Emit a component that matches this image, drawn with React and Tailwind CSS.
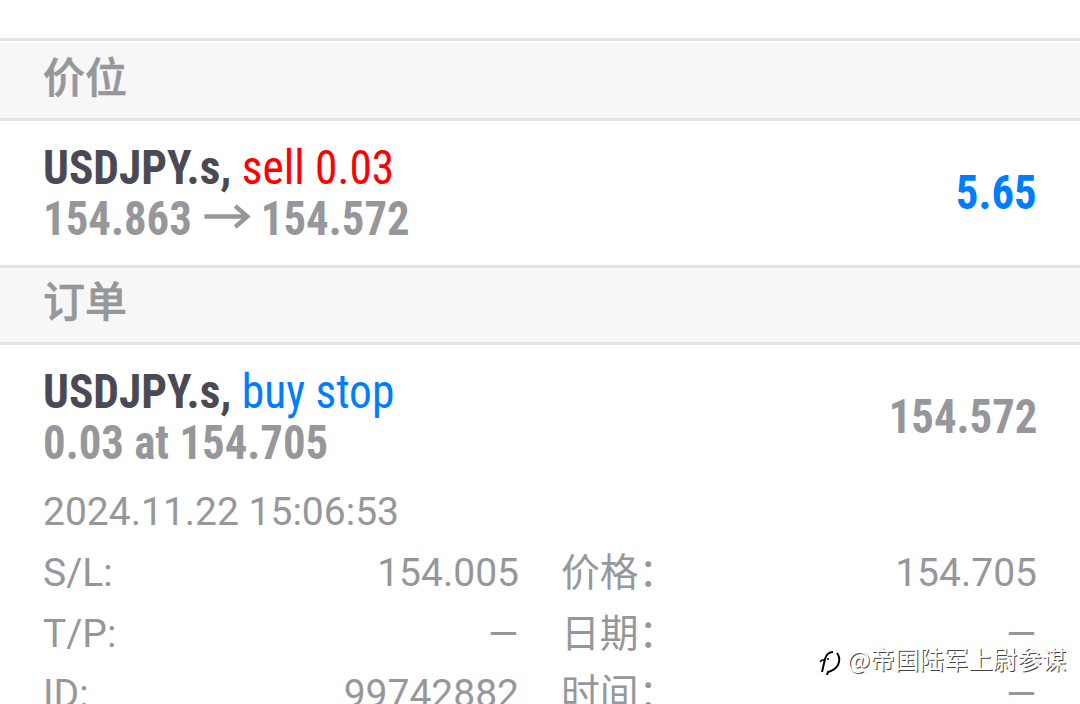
import React from 'react';

const details = [
  { label: 'S/L:', value: '154.005', label2: '价格：', value2: '154.705' },
  { label: 'T/P:', value: '–', label2: '日期：', value2: '–' },
  { label: 'ID:', value: '99742882', label2: '时间：', value2: '–' },
];

const SectionHeader = ({ title }) => (
  <div className="h-[77px] border-b-3 border-[#e3e3e3] bg-[#f7f7f7] px-[43px] text-[42px] leading-[69px] font-medium text-[#96979b] [-webkit-text-stroke:0.6px_#96979b]">
    {title}
  </div>
);

const TradeRow = ({ symbol, action, actionClass, info, value, valueClass }) => (
  <div className="flex items-center justify-between px-[43px] font-['Roboto_Condensed','Roboto','Noto_Sans_CJK_SC',sans-serif] text-[48px] leading-[51px] font-bold [font-stretch:75%]">
    <div>
      <div className="w-fit origin-left scale-x-[0.945] text-[#4b4a54]">
        {symbol}, <span className={`font-normal ${actionClass}`}>{action}</span>
      </div>
      <div className="w-fit origin-left scale-x-[0.933] text-[#96979b]">{info}</div>
    </div>
    <div className={`mb-[2px] origin-right scale-x-[0.933] ${valueClass}`}>{value}</div>
  </div>
);

const Arrow = () => (
  <svg className="mx-[11px] inline-block align-baseline" width="52" height="34" viewBox="0 0 52 34" fill="none" stroke="currentColor" strokeWidth="4.5">
    <path d="M2 15.5H48M35 5L48 15.5L35 26" />
  </svg>
);

const Value = ({ text }) => (
  <span className={text === '–' ? 'origin-right translate-x-[2px] scale-x-[1.32]' : ''}>{text}</span>
);

const Watermark = () => (
  <div className="absolute top-[641px] left-[818px] flex items-center font-['Noto_Sans_CJK_SC',sans-serif] text-[24.5px] leading-[30px] text-white [text-shadow:1px_1px_0.5px_#444]">
    <svg className="mt-[4px] mr-[5px]" width="24" height="32" viewBox="0 0 24 32" fill="none" stroke="#000">
      <path d="M4 27L7 14Q9 7 15 7" strokeWidth="2" />
      <path d="M2 17L4 15H6M9 14H11" strokeWidth="1.4" />
      <path d="M19 8Q23 13 20 20Q17 25 10 27L9 30" strokeWidth="2" />
    </svg>
    @帝国陆军上尉参谋
  </div>
);

const App = () => {
  return (
    <div className="relative h-[704px] w-[1080px] overflow-hidden bg-white font-['Roboto','Noto_Sans_CJK_SC',sans-serif]">
      <div className="mt-[38px] mb-[3px] h-[3px] bg-[#e3e3e3]" />
      <SectionHeader title="价位" />
      <div className="h-36 pt-[21px]">
        <TradeRow
          symbol="USDJPY.s"
          action="sell 0.03"
          actionClass="text-[#ff0000]"
          info={<>154.863<Arrow />154.572</>}
          value="5.65"
          valueClass="text-[#007dff]"
        />
      </div>
      <div className="h-[3px] bg-[#e3e3e3]" />
      <SectionHeader title="订单" />
      <div className="pt-[21px]">
        <TradeRow
          symbol="USDJPY.s"
          action="buy stop"
          actionClass="text-[#007dff]"
          info="0.03 at 154.705"
          value="154.572"
          valueClass="text-[#96979b]"
        />
      </div>
      <div className="mt-[14px] px-[43px] text-[39px] leading-[61px] text-[#96979b]">
        <div>2024.11.22 15:06:53</div>
        {details.map((row) => (
          <div key={row.label} className="flex h-[60.5px] gap-[42px]">
            <div className="flex w-[476px] justify-between">
              <span>{row.label}</span>
              <Value text={row.value} />
            </div>
            <div className="flex flex-1 justify-between">
              <span className="text-[38.8px] leading-[59px]">{row.label2}</span>
              <Value text={row.value2} />
            </div>
          </div>
        ))}
      </div>
      <Watermark />
    </div>
  );
};

export default App;
